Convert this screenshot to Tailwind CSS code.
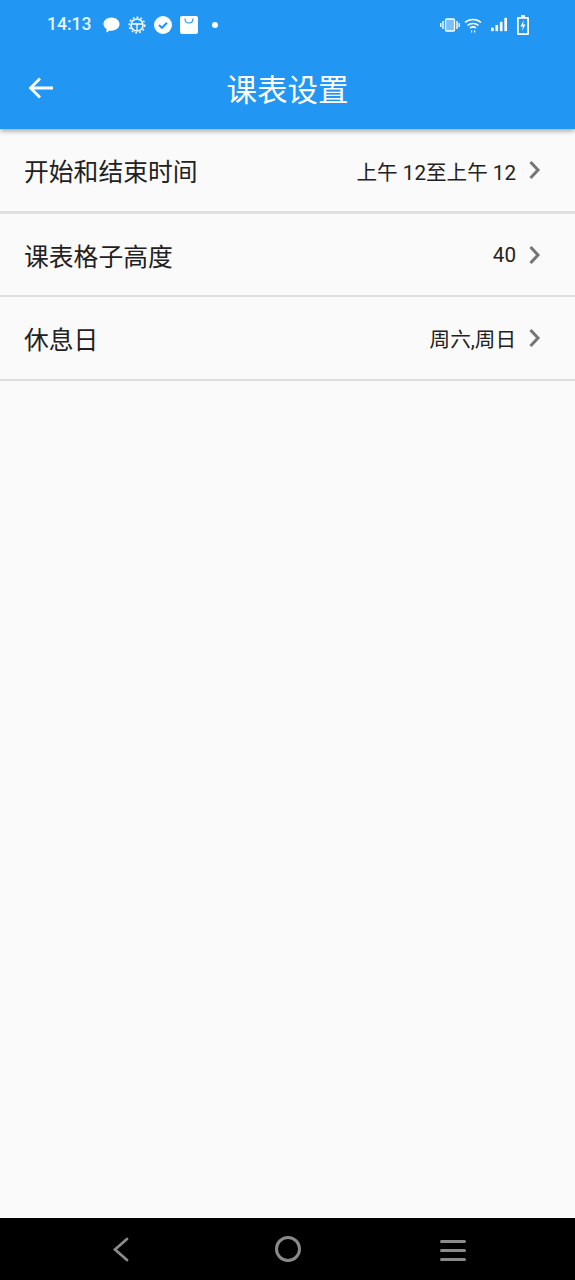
<!DOCTYPE html>
<html lang="zh">
<head>
    <meta charset="UTF-8">
    <meta name="viewport" content="width=device-width, initial-scale=1.0">
    <title>课表设置</title>
    <script src="https://cdn.jsdelivr.net/npm/@tailwindcss/browser@4"></script>
</head>
<body class="bg-[#fafafa] font-['Roboto','Noto_Sans_CJK_SC',sans-serif]">
    <div class="flex flex-col h-[1280px] w-[575px] overflow-hidden">

        <!-- Status bar + app bar -->
        <div class="relative z-10 h-[129px] shrink-0 bg-[#2196f3] text-white shadow-[0_2px_5px_rgba(0,0,0,0.35)]">
            <div class="flex items-center h-[49px] pl-[47px] pr-[46px]">
                <span class="text-[17.5px] font-medium text-white/90 w-[46px]">14:13</span>
                <div class="flex items-center ml-[10px] gap-[8px]">
                    <svg class="w-[17px] h-[18px]" viewBox="0 0 18 18" fill="white"><path d="M9 1c4.700 0 8.500 3 8.500 7s-3.800 7-8.500 7c-.6 0-1.200 0-1.700-.2L3.500 17l.3-3.700C1.800 12 .5 10.100.5 8 .5 4 4.300 1 9 1z"/></svg>
                    <svg class="w-[18px] h-[18px]" viewBox="0 0 18 18" fill="none" stroke="white"><circle cx="9" cy="9" r="6" stroke-width="1.600"/><circle cx="9" cy="9" r="7.800" stroke-width="1.400" stroke-dasharray="2 2"/><path d="M3.500 8h11M9 8v6" stroke-width="1.300"/></svg>
                    <svg class="w-[18px] h-[18px]" viewBox="0 0 18 18"><circle cx="9" cy="9" r="9" fill="white"/><path d="M5 9l3 2.800L13 6.800" fill="none" stroke="#2196f3" stroke-width="2"/></svg>
                    <svg class="w-[18px] h-[18px]" viewBox="0 0 18 18"><rect y="0" width="18" height="18" rx="2" fill="white"/><path d="M5 2.500c0 6 8 6 8 0" fill="none" stroke="#2196f3" stroke-width="1.200"/></svg>
                </div>
                <span class="w-[6px] h-[6px] rounded-full bg-white ml-[14px]"></span>
                <div class="flex items-center ml-auto">
                    <svg class="w-[20px] h-[14px]" viewBox="0 0 20 14" fill="none" stroke="white"><rect x="5.500" y="1" width="9" height="12" rx="1" stroke-width="1.300" fill="white" fill-opacity="0.400"/><path d="M3 3v8M.8 5v4M17 3v8M19.200 5v4" stroke-width="1.400"/></svg>
                    <svg class="w-[18px] h-[16px] ml-[4px]" viewBox="0 0 18 16" fill="none" stroke="white" stroke-width="1.600"><path d="M1 5.500c4.500-4 11.500-4 16 0"/><path d="M3.500 8.500c3-2.600 8-2.600 11 0"/><path d="M6 11c1.700-1.300 4.300-1.300 6 0"/><path d="M7 14.500h1.200M10 14.500h1.200" stroke-width="2"/></svg>
                    <svg class="w-[16px] h-[15px] ml-[9px]" viewBox="0 0 18 15" fill="white"><rect x="0" y="11" width="3" height="4"/><rect x="5" y="8" width="3" height="7"/><rect x="10" y="4.500" width="3" height="10.500"/><rect x="15" y="0" width="3" height="15"/></svg>
                    <svg class="w-[12px] h-[20px] ml-[10px]" viewBox="0 0 12 20"><path d="M4 0h4v2h3a1 1 0 0 1 1 1v16a1 1 0 0 1-1 1H1a1 1 0 0 1-1-1V3a1 1 0 0 1 1-1h3z" fill="white"/><rect x="1.800" y="3.800" width="8.400" height="14.400" fill="#2196f3"/><path d="M7 5L3.500 11.500H6L5 16l3.500-6.500H6z" fill="white"/></svg>
                </div>
            </div>
            <div class="relative flex items-center justify-center h-[80px]">
                <svg class="absolute left-[28px] top-[28px] w-[25px] h-[22px]" viewBox="0 0 25 22" fill="none" stroke="white" stroke-width="2.800"><path d="M25 11H2.500M12 1.500L2.500 11l9.500 9.500"/></svg>
                <h1 class="text-[30.5px] leading-[40px] font-normal pt-[3px]">课表设置</h1>
            </div>
        </div>

        <!-- Settings rows -->
        <div class="flex items-center h-[85px] border-b-[3px] border-[#e0e0e0] pl-[24px] pr-[34px]">
            <span class="text-[24.8px] text-[#212121] pt-[6px]">开始和结束时间</span>
            <span class="ml-auto text-[20.6px] text-[#212121] pt-[6px]">上午 12至上午 12</span>
            <svg class="w-[13px] h-[20px] ml-[12px] mb-[1px]" viewBox="0 0 13 20" fill="none" stroke="#757575" stroke-width="3"><path d="M2.500 2l7.500 8-7.500 8"/></svg>
        </div>
        <div class="flex items-center h-[83px] border-b-[2px] border-[#e0e0e0] pl-[24px] pr-[34px]">
            <span class="text-[24.8px] text-[#212121] pt-[6px]">课表格子高度</span>
            <span class="ml-auto text-[20.6px] text-[#212121] pt-[2px]">40</span>
            <svg class="w-[13px] h-[20px] ml-[12px]" viewBox="0 0 13 20" fill="none" stroke="#757575" stroke-width="3"><path d="M2.500 2l7.500 8-7.500 8"/></svg>
        </div>
        <div class="flex items-center h-[84px] border-b-[2px] border-[#e0e0e0] pl-[24px] pr-[34px]">
            <span class="text-[24.8px] text-[#212121] pt-[6px]">休息日</span>
            <span class="ml-auto text-[20.6px] text-[#212121] pt-[4px]">周六,周日</span>
            <svg class="w-[13px] h-[20px] ml-[12px]" viewBox="0 0 13 20" fill="none" stroke="#757575" stroke-width="3"><path d="M2.500 2l7.500 8-7.500 8"/></svg>
        </div>

        <div class="flex-1"></div>

        <!-- Navigation bar -->
        <div class="relative h-[62px] shrink-0 bg-black">
            <svg class="absolute left-[112px] top-[19px] w-[17px] h-[25px]" viewBox="0 0 17 25" fill="none" stroke="#8a8a8a" stroke-width="2.800" stroke-linecap="round"><path d="M15 2L3 12.500 15 23"/></svg>
            <svg class="absolute left-[275px] top-[18px] w-[26px] h-[26px]" viewBox="0 0 26 26" fill="none" stroke="#8a8a8a" stroke-width="3"><circle cx="13" cy="13" r="11.500"/></svg>
            <div class="absolute left-[440px] top-[22px] flex flex-col gap-[6px] w-[26px]">
                <div class="h-[3px] rounded-full bg-[#8a8a8a]"></div>
                <div class="h-[3px] rounded-full bg-[#8a8a8a]"></div>
                <div class="h-[3px] rounded-full bg-[#8a8a8a]"></div>
            </div>
        </div>
    </div>
</body>
</html>
